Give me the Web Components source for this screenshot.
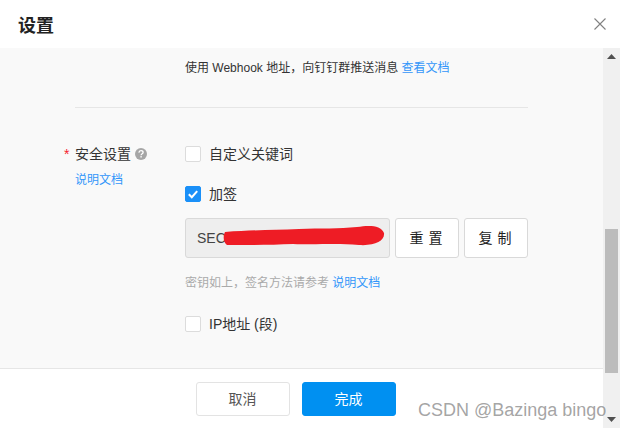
<!DOCTYPE html>
<html lang="zh">
<head>
<meta charset="utf-8">
<title>设置</title>
<style>
  html, body { margin: 0; padding: 0; background: #fff; }
  body {
    font-family: "Liberation Sans", "Noto Sans CJK SC", sans-serif;
    font-size: 14px;
    color: #333;
  }
</style>
</head>
<body>
<settings-dialog></settings-dialog>

<script>
class DocLink extends HTMLElement {
  constructor() {
    super();
    this.attachShadow({ mode: 'open' });
    this.shadowRoot.innerHTML = `
      <style>
        :host { display: inline; color: #3296fa; font-size: 12px; }
      </style>
      <slot></slot>
    `;
  }
}
customElements.define('doc-link', DocLink);

class UiButton extends HTMLElement {
  constructor() {
    super();
    this.attachShadow({ mode: 'open' });
    this.shadowRoot.innerHTML = `
      <style>
        :host {
          display: flex;
          align-items: center;
          justify-content: center;
          box-sizing: border-box;
          padding-bottom: 3px;
          background: #fff;
          border: 1px solid #e3e3e3;
          border-radius: 3px;
          color: #555;
          font-size: 14px;
        }
        :host([primary]) { background: #0090f1; border-color: #0090f1; color: #fff; }
        :host([small]) { border-color: #d9d9d9; color: #222; font-size: 14px; letter-spacing: 5px; padding-left: 3px; }
      </style>
      <slot></slot>
    `;
  }
}
customElements.define('ui-button', UiButton);

class CheckRow extends HTMLElement {
  constructor() {
    super();
    this.attachShadow({ mode: 'open' });
    this.shadowRoot.innerHTML = `
      <style>
        :host { display: flex; align-items: center; gap: 8px; height: 16px; font-size: 14px; color: #333; }
        .box {
          box-sizing: border-box;
          width: 16px;
          height: 16px;
          background: #fff;
          border: 1px solid #dcdcdc;
          border-radius: 2px;
          display: flex;
          align-items: center;
          justify-content: center;
        }
        svg { display: none; }
        span { padding-bottom: 2px; }
        :host([checked]) .box { background: #1a90f8; border-color: #1a90f8; }
        :host([checked]) svg { display: block; }
      </style>
      <div class="box">
        <svg width="12" height="12" viewBox="0 0 12 12"><path d="M1.8 6.2 4.8 9.2 10.2 3.2" fill="none" stroke="#fff" stroke-width="2"/></svg>
      </div>
      <span><slot></slot></span>
    `;
  }
}
customElements.define('check-row', CheckRow);

class SecretField extends HTMLElement {
  constructor() {
    super();
    this.attachShadow({ mode: 'open' });
    this.shadowRoot.innerHTML = `
      <style>
        :host {
          display: flex;
          align-items: center;
          position: relative;
          box-sizing: border-box;
          width: 205px;
          height: 40px;
          padding-left: 11px;
          background: #eeeeee;
          border: 1px solid #d9d9d9;
          border-radius: 3px;
          color: #444;
          font-size: 14px;
        }
        svg { position: absolute; left: 37px; top: 0; }
      </style>
      <slot></slot>
      <svg width="165" height="38" viewBox="0 0 165 38">
        <path d="M2 13 C30 11 50 11 76 10 C98 9 116 10 134 8 C146 6 158 6 161 14 C162 22 152 27 136 26 C112 24 96 26 70 25 C48 26 22 26 4 26 C0 23 0 17 2 13 Z" fill="#ee1c25"/>
      </svg>
    `;
  }
}
customElements.define('secret-field', SecretField);

class ScrollTrack extends HTMLElement {
  constructor() {
    super();
    this.attachShadow({ mode: 'open' });
    this.shadowRoot.innerHTML = `
      <style>
        :host {
          display: flex;
          flex-direction: column;
          align-items: center;
          width: 17px;
          flex: none;
          background: #f0f0f0;
        }
        .arrow { height: 17px; display: flex; align-items: center; justify-content: center; flex: none; }
        .rail { flex: 1; width: 13px; padding-top: 164px; box-sizing: border-box; }
        .thumb { height: 144px; background: #bcbcbc; }
      </style>
      <div class="arrow"><svg width="9" height="5" viewBox="0 0 9 5"><path d="M4.5 0 9 5H0Z" fill="#505050"/></svg></div>
      <div class="rail"><div class="thumb"></div></div>
      <div class="arrow"><svg width="9" height="5" viewBox="0 0 9 5"><path d="M0 0H9L4.5 5Z" fill="#505050"/></svg></div>
    `;
  }
}
customElements.define('scroll-track', ScrollTrack);

class DialogHeader extends HTMLElement {
  constructor() {
    super();
    this.attachShadow({ mode: 'open' });
    this.shadowRoot.innerHTML = `
      <style>
        :host {
          display: flex;
          align-items: center;
          justify-content: space-between;
          height: 48px;
          padding: 0 14px 0 18px;
          background: #fff;
          color: #222;
          font-size: 18px;
          font-weight: 700;
        }
        svg { display: block; }
      </style>
      <span><slot></slot></span>
      <svg width="12" height="12" viewBox="0 0 12 12"><path d="M.5.5l11 11M11.5.5l-11 11" fill="none" stroke="#808080" stroke-width="1.1"/></svg>
    `;
  }
}
customElements.define('dialog-header', DialogHeader);

class SettingsDialog extends HTMLElement {
  constructor() {
    super();
    this.attachShadow({ mode: 'open' });
    this.shadowRoot.innerHTML = `
      <style>
        :host {
          display: flex;
          flex-direction: column;
          position: relative;
          width: 620px;
          height: 428px;
          overflow: hidden;
          background: #fff;
        }
        .under { display: flex; flex: 1; min-height: 0; }
        .main { display: flex; flex-direction: column; flex: 1; min-width: 0; }
        .content { height: 320px; box-sizing: border-box; background: #f9f9f9; padding-top: 12px; }
        .intro { margin-left: 185px; height: 17px; line-height: 17px; font-size: 12px; color: #333; }
        .divider { margin: 30px 75px 0; width: 453px; height: 1px; background: #e6e6e6; }
        .form { display: grid; grid-template-columns: 185px 1fr; margin-top: 38px; }
        .label { padding-left: 64px; }
        .title { display: flex; align-items: center; height: 16px; font-size: 14px; color: #333; }
        .title-text { padding-bottom: 2px; }
        .star { width: 11px; color: #f5222d; font-size: 14px; }
        .help { margin-left: 4px; }
        .doc { margin: 9px 0 0 11px; line-height: 17px; }
        .fields { display: flex; flex-direction: column; }
        .secret { display: flex; gap: 5px; margin-top: 16px; }
        .secret ui-button { width: 64px; height: 40px; }
        .hint { margin-top: 17px; height: 17px; line-height: 17px; font-size: 12px; color: #aaa; }
        .footer {
          flex: 1;
          display: flex;
          justify-content: center;
          gap: 12px;
          padding: 13px 12px 0 0;
          border-top: 1px solid #e6e6e6;
          box-sizing: border-box;
          background: #fff;
        }
        .footer ui-button { width: 94px; height: 34px; }
        .mark {
          position: absolute;
          left: 418px;
          top: 399px;
          color: rgba(120, 120, 120, .68);
          font: 18px/22px "Liberation Sans", sans-serif;
          white-space: nowrap;
        }
      </style>
      <dialog-header>设置</dialog-header>
      <div class="under">
        <div class="main">
          <div class="content">
            <div class="intro">使用 Webhook 地址，向钉钉群推送消息 <doc-link>查看文档</doc-link></div>
            <div class="divider"></div>
            <div class="form">
              <div class="label">
                <div class="title">
                  <span class="star">*</span><span class="title-text">安全设置</span>
                  <svg class="help" width="12" height="12" viewBox="0 0 12 12">
                    <circle cx="6" cy="6" r="6" fill="#a6a6a6"/>
                    <path d="M3.9 4.6C4 3.3 4.9 2.7 6 2.7 7.2 2.7 8.1 3.4 8.1 4.4 8.1 5.7 6.1 5.8 6.1 7.3" fill="none" stroke="#fff" stroke-width="1.3"/>
                    <rect x="5.4" y="8.1" width="1.4" height="1.4" fill="#fff"/>
                  </svg>
                </div>
                <div class="doc"><doc-link>说明文档</doc-link></div>
              </div>
              <div class="fields">
                <check-row>自定义关键词</check-row>
                <check-row checked style="margin-top:24px">加签</check-row>
                <div class="secret">
                  <secret-field>SEC</secret-field>
                  <ui-button small>重置</ui-button>
                  <ui-button small>复制</ui-button>
                </div>
                <div class="hint">密钥如上，签名方法请参考 <doc-link>说明文档</doc-link></div>
                <check-row style="margin-top:24px">IP地址 (段)</check-row>
              </div>
            </div>
          </div>
          <div class="footer">
            <ui-button>取消</ui-button>
            <ui-button primary>完成</ui-button>
          </div>
        </div>
        <scroll-track></scroll-track>
      </div>
      <div class="mark">CSDN @Bazinga bingo</div>
    `;
  }
}
customElements.define('settings-dialog', SettingsDialog);
</script>
</body>
</html>
